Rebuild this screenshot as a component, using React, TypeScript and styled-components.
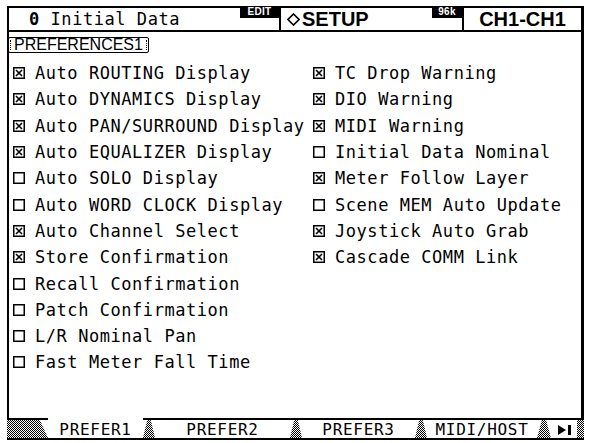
import { FC } from "react";
import styled, { createGlobalStyle } from "styled-components";

const GlobalStyle = createGlobalStyle`
  html, body {
    margin: 0;
    padding: 0;
    background: #fff;
  }
  body {
    font-family: "DejaVu Sans Mono", monospace;
    color: #000;
  }
`;

const dither = `
  background-color: #fff;
  background-image: repeating-conic-gradient(#000 0 25%, #fff 0 50%);
  background-size: 2px 2px;
`;

const Screen = styled.div({
  width: 577,
  marginLeft: 7,
  paddingTop: 6,
});

const Header = styled.header({
  display: "flex",
  height: 26,
  boxSizing: "border-box",
  borderTop: "2px solid #000",
  borderBottom: "2px solid #000",
  borderLeft: "2px solid #000",
  borderRight: "3px solid #000",
});

const HeaderCell = styled.div<{ $width?: number }>`
  position: relative;
  box-sizing: border-box;
  display: flex;
  align-items: center;
  ${(p) => (p.$width ? `width: ${p.$width}px;` : "flex: 1; justify-content: center;")}
  ${(p) => (p.$width ? "border-right: 2px solid #000;" : "")}
`;

const TitleText = styled.span({
  fontFamily: '"DejaVu Sans Mono", monospace',
  fontSize: 17,
  letterSpacing: 0.55,
  paddingLeft: 20,
  whiteSpace: "pre",
});

const SceneNo = styled.b({
  fontWeight: 700,
});

const BigText = styled.span({
  fontFamily: '"Liberation Sans", Arial, sans-serif',
  fontWeight: 700,
  fontSize: 20,
  lineHeight: 1,
});

const Badge = styled.span<{ $w: number }>`
  position: absolute;
  top: -2px;
  right: 0;
  width: ${(p) => p.$w}px;
  height: 12px;
  background: #000;
  color: #fff;
  font-family: "Liberation Sans", Arial, sans-serif;
  font-weight: 700;
  font-size: 10px;
  line-height: 12px;
  text-align: center;
  letter-spacing: 0.3px;
`;

const Diamond = styled.svg({
  width: 13,
  height: 13,
  margin: "0 2px 0 6px",
});

const Panel = styled.main({
  height: 386,
  boxSizing: "border-box",
  borderLeft: "2px solid #000",
  borderRight: "3px solid #000",
  paddingTop: 3,
});

const Label = styled.div({
  position: "relative",
  display: "inline-block",
  marginLeft: -1,
  height: 16,
  boxSizing: "border-box",
  border: "1.5px solid #000",
  borderRadius: 2,
  padding: "0 5px",
  fontFamily: '"Liberation Sans", Arial, sans-serif',
  fontSize: 16,
  lineHeight: "13px",
  "&::before, &::after": {
    content: '""',
    position: "absolute",
    top: 2,
    bottom: 2,
    borderLeft: "1px dotted #000",
  },
  "&::before": { left: 1 },
  "&::after": { right: 1 },
});

const Columns = styled.div({
  display: "flex",
  paddingTop: 6,
  paddingLeft: 4,
});

const Column = styled.div<{ $width?: number }>`
  display: flex;
  flex-direction: column;
  ${(p) => (p.$width ? `width: ${p.$width}px;` : "flex: 1;")}
`;

const Row = styled.div({
  display: "flex",
  alignItems: "center",
  height: 26.3,
  gap: 10,
  fontSize: 17,
  letterSpacing: 0.55,
  whiteSpace: "pre",
});

const Box = styled.svg({
  width: 12,
  height: 12,
  flex: "none",
});

const TabBar = styled.nav({
  display: "flex",
  height: 22,
  boxSizing: "border-box",
  borderBottom: "2px solid #000",
});

const Tab = styled.div<{ $w: number; $active?: boolean }>`
  width: ${(p) => p.$w}px;
  box-sizing: border-box;
  border-top: 2px solid ${(p) => (p.$active ? "transparent" : "#000")};
  display: flex;
  align-items: center;
  justify-content: center;
  font-size: 16px;
  letter-spacing: 0.7px;
  line-height: 1;
  padding-top: 1px;
`;

const Sep = styled.div<{ $w: number }>`
  width: ${(p) => p.$w}px;
  box-sizing: border-box;
  border-top: 2px solid #000;
  display: flex;
`;

const SepFill = styled.div<{ $shape: string }>`
  flex: 1;
  ${dither}
  clip-path: ${(p) => p.$shape};
`;

const Arrow = styled.svg({
  width: 16,
  height: 12,
});

type Item = [string, boolean];

const left: Item[] = [
  ["Auto ROUTING Display", true],
  ["Auto DYNAMICS Display", true],
  ["Auto PAN/SURROUND Display", true],
  ["Auto EQUALIZER Display", true],
  ["Auto SOLO Display", false],
  ["Auto WORD CLOCK Display", false],
  ["Auto Channel Select", true],
  ["Store Confirmation", true],
  ["Recall Confirmation", false],
  ["Patch Confirmation", false],
  ["L/R Nominal Pan", false],
  ["Fast Meter Fall Time", false],
];

const right: Item[] = [
  ["TC Drop Warning", true],
  ["DIO Warning", true],
  ["MIDI Warning", true],
  ["Initial Data Nominal", false],
  ["Meter Follow Layer", true],
  ["Scene MEM Auto Update", false],
  ["Joystick Auto Grab", true],
  ["Cascade COMM Link", true],
];

const CheckBox: FC<{ checked: boolean }> = ({ checked }) => (
  <Box viewBox="0 0 12 12">
    <rect x="0.75" y="0.75" width="10.5" height="10.5" fill="none" stroke="#000" strokeWidth="1.5" />
    {checked && (
      <path d="M3 3 L9 9 M9 3 L3 9" stroke="#000" strokeWidth="1.6" fill="none" />
    )}
  </Box>
);

const Option: FC<{ item: Item }> = ({ item }) => (
  <Row>
    <CheckBox checked={item[1]} />
    <span>{item[0]}</span>
  </Row>
);

const slant = "polygon(35% 0, 65% 0, 100% 100%, 0 100%)";

export default function App() {
  return (
    <>
      <GlobalStyle />
      <Screen>
        <Header>
          <HeaderCell $width={272}>
            <TitleText>
              <SceneNo>0</SceneNo> Initial Data
            </TitleText>
            <Badge $w={39}>EDIT</Badge>
          </HeaderCell>
          <HeaderCell $width={183}>
            <Diamond viewBox="0 0 13 13">
              <path d="M6.5 1 L12 6.5 L6.5 12 L1 6.5 Z" fill="none" stroke="#000" strokeWidth="1.6" />
            </Diamond>
            <BigText>SETUP</BigText>
            <Badge $w={30}>96k</Badge>
          </HeaderCell>
          <HeaderCell>
            <BigText>CH1-CH1</BigText>
          </HeaderCell>
        </Header>
        <Panel>
          <Label>PREFERENCES1</Label>
          <Columns>
            <Column $width={300}>
              {left.map((it) => (
                <Option key={it[0]} item={it} />
              ))}
            </Column>
            <Column>
              {right.map((it) => (
                <Option key={it[0]} item={it} />
              ))}
            </Column>
          </Columns>
        </Panel>
        <TabBar>
          <Sep $w={41}>
            <SepFill $shape="polygon(0 0, 80% 0, 100% 100%, 0 100%)" />
          </Sep>
          <Tab $w={95} $active>PREFER1</Tab>
          <Sep $w={12}>
            <SepFill $shape={slant} />
          </Sep>
          <Tab $w={135}>PREFER2</Tab>
          <Sep $w={12}>
            <SepFill $shape={slant} />
          </Sep>
          <Tab $w={113}>PREFER3</Tab>
          <Sep $w={12}>
            <SepFill $shape={slant} />
          </Sep>
          <Tab $w={110}>MIDI/HOST</Tab>
          <Sep $w={14}>
            <SepFill $shape={slant} />
          </Sep>
          <Tab $w={26}>
            <Arrow viewBox="0 0 16 12">
              <path d="M2 1 L10 6 L2 11 Z" fill="#000" />
              <rect x="12" y="1" width="3" height="10" fill="#000" />
            </Arrow>
          </Tab>
          <Sep $w={7}>
            <SepFill $shape="none" />
          </Sep>
        </TabBar>
      </Screen>
    </>
  );
}
